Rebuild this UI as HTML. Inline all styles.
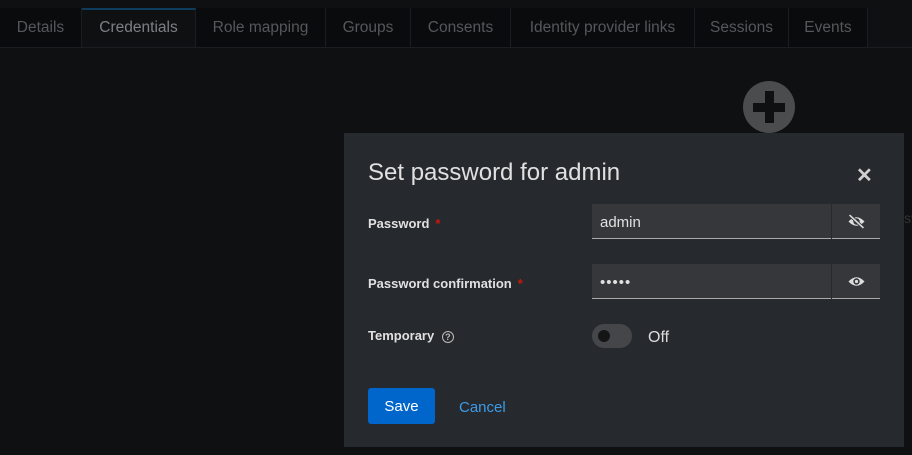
<!DOCTYPE html><html><head><style>
body{margin:0;width:912px;height:455px;background:#0f1012;font-family:"Liberation Sans",sans-serif;position:relative;overflow:hidden}
.tabs{position:absolute;top:8px;left:0;height:39px;width:912px;border-bottom:1px solid #1c1d20}
.tab{position:absolute;top:0;height:39px;line-height:40px;text-align:center;color:#55575a;font-size:15.5px;border-right:1px solid #1c1d20;background:#0a0b0c;box-sizing:border-box}
.tab.a{color:#7d7f82;background:#0f1012;border-top:2px solid #0d3c5e;line-height:36px}
.plus{position:absolute;left:743px;top:81px;width:52px;height:52px;border-radius:50%;background:#4b4c4e}
.plus:before{content:"";position:absolute;left:22px;top:10px;width:9px;height:32px;background:#0f1012}
.plus:after{content:"";position:absolute;left:10px;top:22px;width:32px;height:9px;background:#0f1012}
.m{position:absolute;left:344px;top:133px;width:560px;height:314px;background:#26292d}
.t{position:absolute;left:24px;top:26px;font-size:24px;color:#e0e0e0}
.x{position:absolute;left:512px;top:30px;color:#d0d0d0;font-size:20px;font-weight:bold}
.l{position:absolute;left:24px;font-size:13px;font-weight:bold;color:#e0e0e0}
.l span{color:#c9190b;margin-left:6px}
.in{position:absolute;left:248px;width:239px;height:35px;background:#36373a;border-bottom:1px solid #aaa;box-sizing:border-box;color:#e0e0e0;font-size:15px;padding:10px 8px 0}
.b{position:absolute;left:488px;width:48px;height:35px;background:#36373a;border-bottom:1px solid #aaa;box-sizing:border-box}
.b svg{position:absolute;left:15px;top:10px}
.sw{position:absolute;left:248px;top:191px;width:40px;height:24px;border-radius:12px;background:#454649}
.sw:after{content:"";position:absolute;left:6px;top:6px;width:12px;height:12px;border-radius:50%;background:#151515}
.save{position:absolute;left:24px;top:255px;width:67px;height:36px;background:#0066cc;border-radius:3px;color:#fff;font-size:15px;text-align:center;line-height:37px}
</style></head><body>
<div class="tabs">
<div class="tab" style="left:0;width:82px">Details</div>
<div class="tab a" style="left:82px;width:114px">Credentials</div>
<div class="tab" style="left:196px;width:130px">Role mapping</div>
<div class="tab" style="left:326px;width:85px">Groups</div>
<div class="tab" style="left:411px;width:100px">Consents</div>
<div class="tab" style="left:511px;width:184px">Identity provider links</div>
<div class="tab" style="left:695px;width:94px">Sessions</div>
<div class="tab" style="left:789px;width:79px">Events</div>
</div>
<div class="plus"></div>
<div class="m">
<div class="t">Set password for admin</div><div class="x">✕</div>
<div class="l" style="top:83px">Password<span>*</span></div>
<div class="in" style="top:71px">admin</div>
<div class="b" style="top:71px"><svg width="19" height="15" viewBox="0 0 17 14"><path d="M1 7Q8.5-1 16 7Q8.5 15 1 7Z" fill="#ddd"/><circle cx="8.5" cy="7" r="3" fill="#36373a"/><path d="M2 1L15 13" stroke="#36373a" stroke-width="3"/><path d="M2 1L15 13" stroke="#ddd" stroke-width="1.5"/></svg></div>
<div class="l" style="top:143px">Password confirmation<span>*</span></div>
<div class="in" style="top:131px;letter-spacing:1px">•••••</div>
<div class="b" style="top:131px"><svg width="19" height="15" viewBox="0 0 17 14"><path d="M1 7Q8.5-1 16 7Q8.5 15 1 7Z" fill="#ddd"/><circle cx="8.5" cy="7" r="3" fill="#36373a"/><circle cx="8.5" cy="7" r="1.5" fill="#ddd"/></svg></div>
<div class="l" style="top:195px">Temporary <span style="color:#bbb;border:1.5px solid #bbb;border-radius:50%;display:inline-block;width:10px;height:10px;font-size:9px;text-align:center;line-height:10px;margin-left:4px">?</span></div>
<div class="sw"></div><div style="position:absolute;left:304px;top:196px;color:#ddd;font-size:16px">Off</div>
<div class="save">Save</div>
<div style="position:absolute;left:115px;top:266px;color:#3d9be9;font-size:15px">Cancel</div>
</div>
<div style="position:absolute;left:904px;top:210px;color:#333;font-size:14px">sv</div>
</body></html>
